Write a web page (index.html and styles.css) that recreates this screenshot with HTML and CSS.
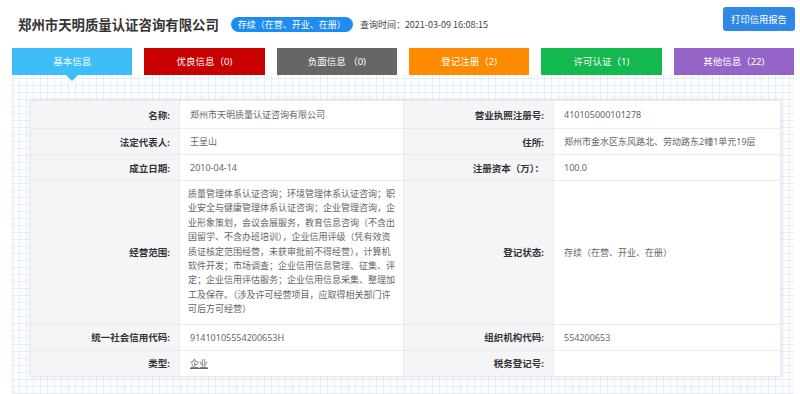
FILE: index.html
```html
<!DOCTYPE html>
<html lang="zh-CN">
<head>
    <meta charset="UTF-8">
    <meta name="viewport" content="width=device-width, initial-scale=1.0">
    <title>企业信用信息</title>
    <link rel="stylesheet" href="styles.css">
</head>
<body>
    <div class="header">
        <div class="title-group">
            <h1>郑州市天明质量认证咨询有限公司</h1>
            <span class="status-badge">存续（在营、开业、在册）</span>
            <span class="query-time">查询时间：2021-03-09 16:08:15</span>
        </div>
        <button class="print-btn">打印信用报告</button>
    </div>

    <div class="tabs">
        <a class="tab tab-basic active">基本信息</a>
        <a class="tab tab-good">优良信息（0)</a>
        <a class="tab tab-bad">负面信息 （0)</a>
        <a class="tab tab-reg">登记注册（2)</a>
        <a class="tab tab-license">许可认证（1)</a>
        <a class="tab tab-other">其他信息（22)</a>
    </div>

    <div class="content">
        <table class="info-table">
            <colgroup>
                <col class="col-label">
                <col class="col-value">
                <col class="col-label2">
                <col class="col-value2">
            </colgroup>
            <tbody>
                <tr class="first-row">
                    <th>名称:</th>
                    <td>郑州市天明质量认证咨询有限公司</td>
                    <th>营业执照注册号:</th>
                    <td>410105000101278</td>
                </tr>
                <tr>
                    <th>法定代表人:</th>
                    <td>王呈山</td>
                    <th>住所:</th>
                    <td>郑州市金水区东风路北、劳动路东2幢1单元19层</td>
                </tr>
                <tr>
                    <th>成立日期:</th>
                    <td>2010-04-14</td>
                    <th>注册资本（万）：</th>
                    <td>100.0</td>
                </tr>
                <tr>
                    <th>经营范围:</th>
                    <td class="scope">质量管理体系认证咨询；环境管理体系认证咨询；职业安全与健康管理体系认证咨询；企业管理咨询，企业形象策划，会议会展服务，教育信息咨询（不含出国留学、不含办班培训），企业信用评级（凭有效资质证核定范围经营，未获审批前不得经营），计算机软件开发；市场调查；企业信用信息管理、征集、评定；企业信用评估服务；企业信用信息采集、整理加工及保存。（涉及许可经营项目，应取得相关部门许可后方可经营）</td>
                    <th>登记状态:</th>
                    <td>存续（在营、开业、在册）</td>
                </tr>
                <tr>
                    <th>统一社会信用代码:</th>
                    <td>91410105554200653H</td>
                    <th>组织机构代码:</th>
                    <td>554200653</td>
                </tr>
                <tr>
                    <th>类型:</th>
                    <td><a class="type-link">企业</a></td>
                    <th>税务登记号:</th>
                    <td></td>
                </tr>
            </tbody>
        </table>
    </div>
</body>
</html>
```

FILE: styles.css
```css
body {
    margin: 0;
    font-family: "Noto Sans", "Noto Sans CJK SC", sans-serif;
    background-color: #fff;
    color: #333;
    overflow: hidden;
}
.header {
    display: flex;
    align-items: flex-start;
    padding: 7px 5px 0 18px;
}
.title-group {
    display: flex;
    align-items: center;
    height: 24px;
    margin-top: 5px;
}
.header h1 {
    margin: 0;
    font-size: 13.4px;
    font-weight: bold;
    color: #333;
}
.status-badge {
    margin-left: 12px;
    padding: 0 7px;
    height: 15px;
    line-height: 15px;
    border-radius: 8px;
    background-color: #1f8cf0;
    color: #fff;
    font-size: 9px;
}
.query-time {
    margin-left: 7px;
    font-size: 9px;
    color: #444;
    font-family: "Noto Sans CJK SC", sans-serif;
}
.print-btn {
    margin-left: auto;
    width: 72px;
    height: 24px;
    border: none;
    border-radius: 3px;
    background-color: #2f87e6;
    color: #fff;
    font-family: inherit;
    font-size: 9.3px;
    padding: 0;
}
.tabs {
    display: flex;
    gap: 12px;
    margin: 12px 6px 0 12px;
}
.tab {
    flex: 1;
    height: 27px;
    line-height: 27px;
    text-align: center;
    color: #fff;
    font-size: 9.5px;
    position: relative;
}
.tab-basic { background-color: #3fbdf8; }
.tab-good { background-color: #c90000; }
.tab-bad { background-color: #666; }
.tab-reg { background-color: #fd8a00; }
.tab-license { background-color: #13b84f; }
.tab-other { background-color: #9564c9; }
.tab.active::after {
    content: "";
    position: absolute;
    left: 50%;
    bottom: -6px;
    margin-left: -6px;
    border-left: 6px solid transparent;
    border-right: 6px solid transparent;
    border-top: 6px solid #3fbdf8;
}
.content {
    margin: 0 6px 0 12px;
    padding: 25px 14px 17px 18px;
    background-color: #fbfcfe;
    background-image:
        repeating-linear-gradient(0deg, rgba(190, 206, 228, 0.3) 0 1px, transparent 1px 7px),
        repeating-linear-gradient(90deg, rgba(190, 206, 228, 0.3) 0 1px, transparent 1px 7px);
}
.info-table {
    width: 750px;
    table-layout: fixed;
    border-collapse: collapse;
    background-color: #fff;
    box-shadow: 0 0 4px rgba(0, 0, 0, 0.08);
}
.col-label { width: 149px; }
.col-value { width: 224px; }
.col-label2 { width: 150px; }
.col-value2 { width: 227px; }
.info-table th,
.info-table td {
    border: 1px solid #e8ebf0;
    height: 25px;
    padding: 0 10px;
    font-size: 9px;
}
.info-table .first-row th,
.info-table .first-row td {
    height: 27px;
}
.info-table th {
    background-color: #f5f5f7;
    text-align: right;
    font-weight: bold;
    font-size: 9.5px;
    color: #333;
    padding-right: 9px;
}
.info-table td {
    color: #666;
    text-align: left;
}
.info-table td.scope {
    padding: 6px 8px 7px 8px;
    line-height: 14.4px;
}
.type-link {
    color: #666;
    text-decoration: underline;
}
```
